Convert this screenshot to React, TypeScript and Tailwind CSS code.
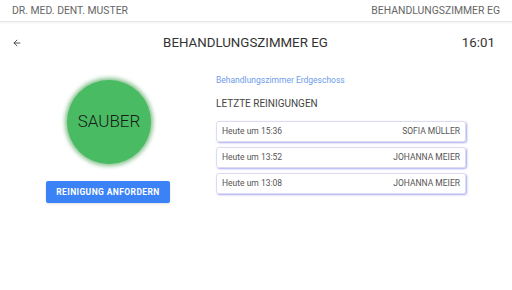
import { ArrowLeft } from 'lucide-react';

const cleanings = [
    { time: 'Heute um 15:36', name: 'SOFIA MÜLLER' },
    { time: 'Heute um 13:52', name: 'JOHANNA MEIER' },
    { time: 'Heute um 13:08', name: 'JOHANNA MEIER' },
];

export default function App() {
    return (
        <div className="w-[512px] h-[290px] bg-white overflow-hidden font-['Roboto',sans-serif] text-[#444]">
            <div className="h-[22px] flex items-center justify-between px-3 border-b border-[#e8e8e8] shadow-[0_1px_2px_rgba(0,0,0,0.06)]">
                <span className="text-[10.4px] text-[#666]">DR. MED. DENT. MUSTER</span>
                <span className="text-[10.4px] text-[#666]">BEHANDLUNGSZIMMER EG</span>
            </div>

            <div className="h-[42px] flex items-center justify-between pl-3 pr-[17px]">
                <ArrowLeft className="w-[10px] h-[10px] text-[#333]" strokeWidth={2} />
                <h1 className="text-[13.3px] text-[#333] ml-[7px]">BEHANDLUNGSZIMMER EG</h1>
                <span className="text-[13.3px] text-[#333]">16:01</span>
            </div>

            <div className="flex pt-[8px]">
                <div className="w-[216px] flex flex-col items-center">
                    <div className="w-[84px] h-[84px] mt-[8px] ml-[2px] rounded-full bg-[#48bb63] shadow-[0_0_4px_2px_rgba(46,150,60,0.6)] flex items-center justify-center">
                        <span className="text-[17px] font-light text-[#1a1a1a]">SAUBER</span>
                    </div>
                    <button className="mt-[17px] w-[124px] h-[22px] rounded-[2px] bg-[#3b82f6] text-white text-[8.5px] font-bold tracking-[0.4px] shadow-sm">
                        REINIGUNG ANFORDERN
                    </button>
                </div>

                <div className="w-[250px] flex flex-col">
                    <p className="text-[8.5px] text-[#6d9be9] mt-[2px]">Behandlungszimmer Erdgeschoss</p>
                    <p className="text-[10px] text-[#444] mt-[9px]">LETZTE REINIGUNGEN</p>
                    <div className="flex flex-col gap-[5px] mt-[10px]">
                        {cleanings.map((c, i) => (
                            <div
                                key={i}
                                className="h-[21px] flex items-center justify-between px-[5px] rounded-[3px] border border-[#dcdcf0] shadow-[1px_1px_2px_rgba(100,100,230,0.55)]"
                            >
                                <span className="text-[8.5px] text-[#555]">{c.time}</span>
                                <span className="text-[8.5px] text-[#555]">{c.name}</span>
                            </div>
                        ))}
                    </div>
                </div>
            </div>
        </div>
    );
}
